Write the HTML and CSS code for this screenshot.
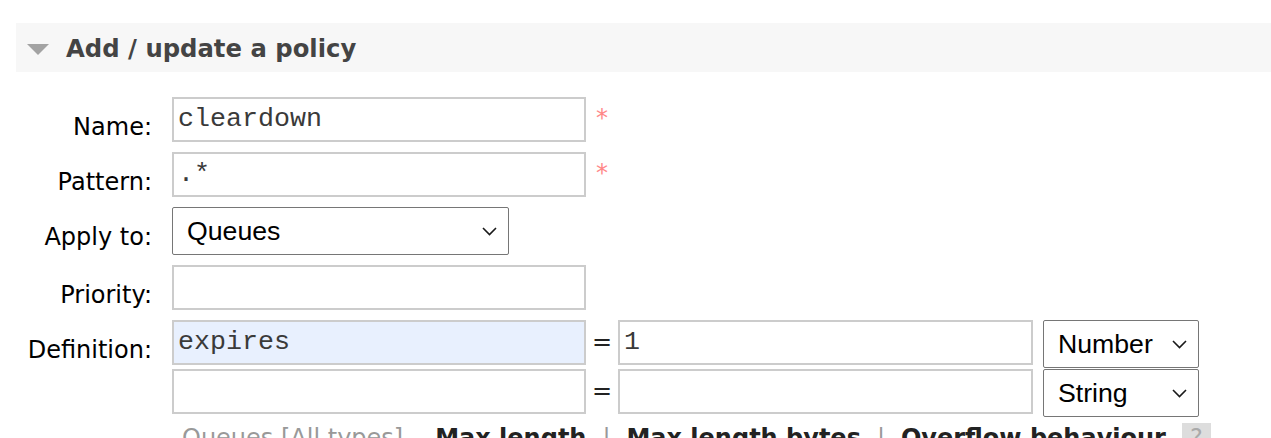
FILE: index.html
```html
<!DOCTYPE html>
<html>
<head>
<meta charset="utf-8">
<title>Add / update a policy</title>
<link rel="stylesheet" href="styles.css">
</head>
<body>
<div class="section">
  <div class="section-head">
    <span class="toggle"></span>
    <h2 class="section-title">Add / update a policy</h2>
  </div>
  <form class="policy-form">
    <div class="row">
      <label class="lbl" for="p-name">Name:</label>
      <div class="field">
        <input class="txt" id="p-name" type="text" value="cleardown">
        <span class="mand">*</span>
      </div>
    </div>
    <div class="row">
      <label class="lbl" for="p-pattern">Pattern:</label>
      <div class="field">
        <input class="txt" id="p-pattern" type="text" value=".*">
        <span class="mand">*</span>
      </div>
    </div>
    <div class="row">
      <label class="lbl">Apply to:</label>
      <div class="field">
        <div class="sel sel-wide">
          <span>Queues</span>
          <svg class="chev" viewBox="0 0 15 9"><polyline points="1,1 7.5,7.5 14,1" fill="none" stroke="#1a1a1a" stroke-width="1.6"/></svg>
        </div>
      </div>
    </div>
    <div class="row">
      <label class="lbl" for="p-priority">Priority:</label>
      <div class="field">
        <input class="txt" id="p-priority" type="text" value="">
      </div>
    </div>
    <div class="row">
      <label class="lbl">Definition:</label>
      <div class="field-col">
        <div class="defs">
          <input class="txt autofill" type="text" value="expires">
          <span class="eq">=</span>
          <input class="txt val" type="text" value="1">
          <div class="sel sel-type">
            <span>Number</span>
            <svg class="chev" viewBox="0 0 15 9"><polyline points="1,1 7.5,7.5 14,1" fill="none" stroke="#1a1a1a" stroke-width="1.6"/></svg>
          </div>
          <input class="txt" type="text" value="">
          <span class="eq">=</span>
          <input class="txt val" type="text" value="">
          <div class="sel sel-type">
            <span>String</span>
            <svg class="chev" viewBox="0 0 15 9"><polyline points="1,1 7.5,7.5 14,1" fill="none" stroke="#1a1a1a" stroke-width="1.6"/></svg>
          </div>
        </div>
        <div class="help-row">
          <span class="help-type">Queues [All types]</span>
          <span class="help-link">Max length</span>
          <span class="help-sep">|</span>
          <span class="help-link">Max length bytes</span>
          <span class="help-sep">|</span>
          <span class="help-link">Overflow behaviour</span>
          <span class="help-q">?</span>
        </div>
      </div>
    </div>
  </form>
</div>
</body>
</html>
```

FILE: styles.css
```css
body {
  margin: 0;
  padding: 23px 0 0 16px;
  font-family: "DejaVu Sans", Verdana, sans-serif;
  font-size: 24px;
  color: #000;
  background: #fff;
  overflow: hidden;
}

.section-head {
  display: flex;
  align-items: center;
  background: #f7f7f7;
  padding: 12px 0 9px 11px;
}

.toggle {
  width: 0;
  height: 0;
  border-left: 11.5px solid transparent;
  border-right: 11.5px solid transparent;
  border-top: 11px solid #a3a3a3;
  margin-right: 17px;
}

.section-title {
  margin: 0;
  font-size: 24.3px;
  line-height: 28px;
  font-weight: bold;
  color: #444;
}

.policy-form {
  margin-top: 25px;
  display: flex;
  flex-direction: column;
  gap: 10px;
}

.row {
  display: flex;
  align-items: flex-start;
}

.lbl {
  flex: none;
  width: 136px;
  margin-right: 20px;
  padding-top: 16px;
  line-height: 28px;
  text-align: right;
}

.field {
  display: flex;
  align-items: baseline;
}

.field-col {
  display: flex;
  flex-direction: column;
}

.txt {
  box-sizing: border-box;
  width: 414px;
  height: 45px;
  margin: 0;
  padding: 0 4px 2px;
  border: 2px solid #ccc;
  border-radius: 0;
  background: #fff;
  font-family: "Liberation Mono", "Courier New", monospace;
  font-size: 26.67px;
  color: #3a3a3a;
  outline: none;
}

.txt.autofill {
  background: #e8f0fe;
}

.txt.val {
  width: 415px;
}

.mand {
  color: #f88;
  padding: 0 10px;
  line-height: 28px;
}

.sel {
  box-sizing: border-box;
  height: 48px;
  display: flex;
  align-items: center;
  justify-content: space-between;
  padding: 0 11px 0 14px;
  border: 1px solid #767676;
  border-radius: 2px;
  background: #fff;
  font-family: "Liberation Sans", Arial, sans-serif;
  font-size: 26.67px;
  color: #000;
}

.sel-wide {
  width: 337px;
}

.sel-type {
  width: 156px;
  margin-left: 10px;
}

.chev {
  flex: none;
  width: 15px;
  height: 9px;
}

.defs {
  display: grid;
  grid-template-columns: 414px 32px 415px auto;
  row-gap: 1px;
  align-items: start;
}

.eq {
  height: 45px;
  line-height: 45px;
  text-align: center;
  color: #222;
}

.help-row {
  display: flex;
  align-items: baseline;
  margin-top: 6px;
  padding-left: 10px;
  line-height: 28px;
  white-space: nowrap;
}

.help-type {
  color: #999;
  margin-right: 32px;
}

.help-link {
  font-weight: bold;
  color: #222;
}

.help-sep {
  width: 40px;
  text-align: center;
  color: #999;
}

.help-q {
  margin-left: 16px;
  padding: 1px 8px 0;
  background: #ddd;
  color: #aaa;
}
```
